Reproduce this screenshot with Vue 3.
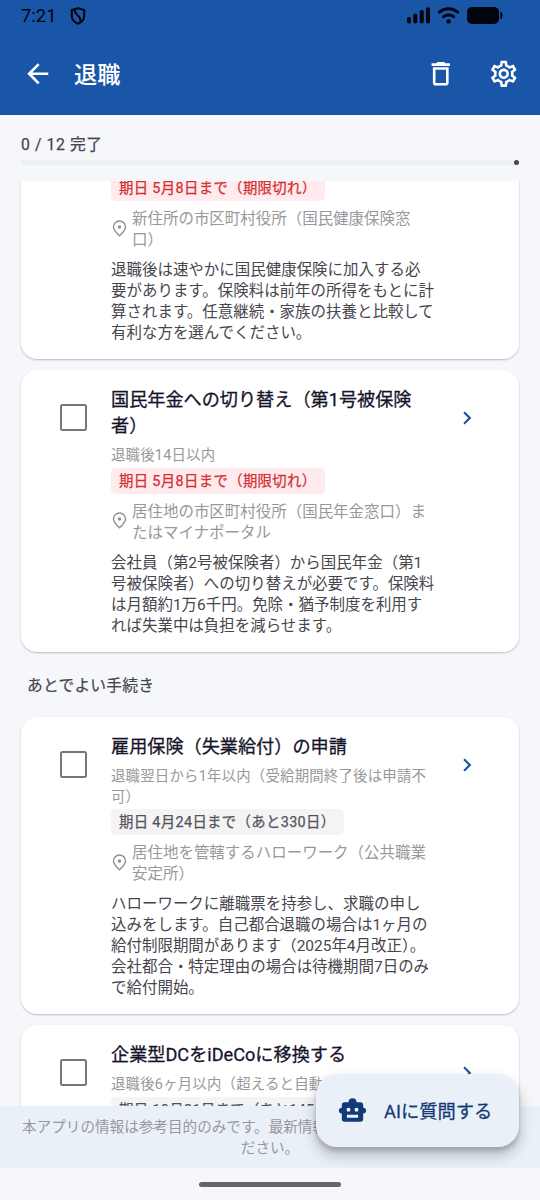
<script setup>
const gear = 'M19.43 12.98c.04-.32.07-.64.07-.98s-.03-.66-.07-.98l2.11-1.65c.19-.15.24-.42.12-.64l-2-3.46c-.09-.16-.26-.25-.44-.25-.06 0-.12.01-.17.03l-2.49 1c-.52-.4-1.08-.73-1.69-.98l-.38-2.65C14.46 2.18 14.25 2 14 2h-4c-.25 0-.46.18-.49.42l-.38 2.65c-.61.25-1.17.59-1.69.98l-2.49-1c-.06-.02-.12-.03-.18-.03-.17 0-.34.09-.43.25l-2 3.46c-.13.22-.07.49.12.64l2.11 1.65c-.04.32-.07.65-.07.98s.03.66.07.98l-2.11 1.65c-.19.15-.24.42-.12.64l2 3.46c.09.16.26.25.44.25.06 0 .12-.01.17-.03l2.49-1c.52.4 1.08.73 1.69.98l.38 2.65c.03.24.24.42.49.42h4c.25 0 .46-.18.49-.42l.38-2.65c.61-.25 1.17-.59 1.69-.98l2.49 1c.06.02.12.03.18.03.17 0 .34-.09.43-.25l2-3.46c.12-.22.07-.49-.12-.64l-2.11-1.65zm-1.98-1.71c.04.31.05.52.05.73 0 .21-.02.43-.05.73l-.14 1.13.89.7 1.08.84-.7 1.21-1.27-.51-1.04-.42-.9.68c-.43.32-.84.56-1.25.73l-1.06.43-.16 1.13-.2 1.35h-1.4l-.19-1.35-.16-1.13-1.06-.43c-.43-.18-.83-.41-1.23-.71l-.91-.7-1.06.43-1.27.51-.7-1.21 1.08-.84.89-.7-.14-1.13c-.03-.31-.05-.54-.05-.74s.02-.43.05-.73l.14-1.13-.89-.7-1.08-.84.7-1.21 1.27.51 1.04.42.9-.68c.43-.32.84-.56 1.25-.73l1.06-.43.16-1.13.2-1.35h1.39l.19 1.35.16 1.13 1.06.43c.43.18.83.41 1.23.71l.91.7 1.06-.43 1.27-.51.7 1.21-1.07.85-.89.7.14 1.13zM12 8c-2.21 0-4 1.79-4 4s1.79 4 4 4 4-1.79 4-4-1.79-4-4-4zm0 6c-1.1 0-2-.9-2-2s.9-2 2-2 2 .9 2 2-.9 2-2 2z'

const items = [
  {
    partial: true,
    title: [],
    sub: [],
    due: '期日 5月8日まで（期限切れ）',
    late: true,
    place: ['新住所の市区町村役所（国民健康保険窓', '口）'],
    desc: ['退職後は速やかに国民健康保険に加入する必', '要があります。保険料は前年の所得をもとに計', '算されます。任意継続・家族の扶養と比較して', '有利な方を選んでください。'],
  },
  {
    title: ['国民年金への切り替え（第1号被保険', '者）'],
    sub: ['退職後14日以内'],
    due: '期日 5月8日まで（期限切れ）',
    late: true,
    place: ['居住地の市区町村役所（国民年金窓口）ま', 'たはマイナポータル'],
    desc: ['会社員（第2号被保険者）から国民年金（第1', '号被保険者）への切り替えが必要です。保険料', 'は月額約1万6千円。免除・猶予制度を利用す', 'れば失業中は負担を減らせます。'],
  },
  {
    section: 'あとでよい手続き',
    title: ['雇用保険（失業給付）の申請'],
    sub: ['退職翌日から1年以内（受給期間終了後は申請不', '可）'],
    due: '期日 4月24日まで（あと330日）',
    place: ['居住地を管轄するハローワーク（公共職業', '安定所）'],
    desc: ['ハローワークに離職票を持参し、求職の申し', '込みをします。自己都合退職の場合は1ヶ月の', '給付制限期間があります（2025年4月改正）。', '会社都合・特定理由の場合は待機期間7日のみ', 'で給付開始。'],
  },
  {
    title: ['企業型DCをiDeCoに移換する'],
    sub: ['退職後6ヶ月以内（超えると自動'],
    due: '期日 10月21日まで（あと145日）',
    place: [],
    desc: [],
  },
]
</script>

<template>
  <div class="screen">
    <header class="top">
      <div class="status">
        <span class="clock">7:21</span>
        <svg class="shield" width="16" height="18" viewBox="0 0 16 18" fill="none" stroke="#02040d" stroke-width="2">
          <path d="M8 1.200 14.200 3v6c0 3.700-2.400 6.200-6.200 7.700C4.200 15.200 1.800 12.700 1.800 9V3z" stroke-linejoin="round" />
          <path d="M5 2.800C3.800 9.500 11.500 7 10.300 14.500" />
        </svg>
        <svg class="signals" width="98" height="20" viewBox="0 0 98 20" fill="#02040d">
          <rect x="0" y="11" width="4" height="6.500" rx="1.800" />
          <rect x="6.300" y="7.500" width="4" height="10" rx="1.800" />
          <rect x="12.700" y="4" width="4" height="13.500" rx="1.800" />
          <rect x="19" y="1.300" width="4" height="16.200" rx="1.800" />
          <g fill="none" stroke="#02040d" stroke-width="3" stroke-linecap="round">
            <path d="M32.500 6.200c5-4.600 13.200-4.600 18.200 0" />
            <path d="M36.600 10.700c2.900-2.400 7.200-2.400 10 0" />
          </g>
          <circle cx="41.600" cy="15.400" r="2.200" />
          <rect x="60" y="1" width="32" height="17" rx="5" />
          <path d="M93.300 5.500c3 1.300 3 6.700 0 8z" />
        </svg>
      </div>
      <div class="bar">
        <svg class="ic" viewBox="0 0 24 24"><path d="M20 11H7.830l5.590-5.590L12 4l-8 8 8 8 1.410-1.410L7.830 13H20z" /></svg>
        <h1>退職</h1>
        <svg class="ic" viewBox="0 0 24 24"><path d="M16 9v10H8V9h8m-1.500-6h-5l-1 1H5v2h14V4h-3.500l-1-1zM18 7H6v12c0 1.100.9 2 2 2h8c1.100 0 2-.9 2-2V7z" /></svg>
        <svg class="ic gear" viewBox="0 0 24 24"><path :d="gear" /></svg>
      </div>
    </header>

    <section class="progress">
      <div class="count">0 / 12 完了</div>
      <div class="track"><i></i></div>
    </section>

    <main class="list">
      <template v-for="(it, i) in items" :key="i">
        <h2 v-if="it.section">{{ it.section }}</h2>
        <article class="card" :class="{ partial: it.partial }">
          <div class="side"><span v-if="!it.partial" class="box"></span></div>
          <div class="body">
            <div v-if="it.title.length" class="title"><div v-for="l in it.title" :key="l">{{ l }}</div></div>
            <div v-if="it.sub.length" class="sub"><div v-for="l in it.sub" :key="l">{{ l }}</div></div>
            <div class="chip" :class="{ late: it.late }">{{ it.due }}</div>
            <div v-if="it.place.length" class="place">
              <svg width="17" height="17" viewBox="0 0 24 24" fill="none" stroke="#919196" stroke-width="2"><path d="M12 22.300C7.500 18 3.500 13.900 3.500 9.800a8.500 8.500 0 0 1 17 0c0 4.100-4 8.200-8.500 12.500z" /><circle cx="12" cy="9.800" r="1.500" fill="#919196" /></svg>
              <div><div v-for="l in it.place" :key="l">{{ l }}</div></div>
            </div>
            <div v-if="it.desc.length" class="desc"><div v-for="l in it.desc" :key="l">{{ l }}</div></div>
          </div>
          <svg v-if="!it.partial" class="chev" viewBox="0 0 24 24"><path d="M10 6 8.590 7.410 13.170 12l-4.580 4.590L10 18l6-6z" /></svg>
        </article>
      </template>
    </main>

    <footer class="note">
      <div class="n1">本アプリの情報は参考目的のみです。最新情報</div>
      <div class="n2">ださい。</div>
    </footer>
    <div class="home"><i></i></div>

    <button class="fab">
      <svg width="33" height="32" viewBox="0 0 24 24"><path fill="#133a78" fill-rule="evenodd" d="M22.200 11.700a2.300 2.300 0 0 0-2.200-2.200V7.500a2 2 0 0 0-2-2h-3a3 3 0 0 0-6 0H6a2 2 0 0 0-2 2v2a2.200 2.200 0 0 0 0 4.400V18a2 2 0 0 0 2 2h12a2 2 0 0 0 2-2v-4.100a2.200 2.200 0 0 0 2.200-2.200zM9 9.500a1.500 1.500 0 1 1 0 3 1.500 1.500 0 0 1 0-3zm6 0a1.500 1.500 0 1 1 0 3 1.500 1.500 0 0 1 0-3zM7.800 14.800h8.400v2.200H7.800z" /></svg>
      <span>AIに質問する</span>
    </button>
  </div>
</template>

<style>
body { margin: 0; }
</style>

<style scoped>
.screen {
  position: relative;
  width: 540px;
  height: 1200px;
  overflow: hidden;
  display: flex;
  flex-direction: column;
  background: #f5f7fb;
  font-family: Roboto, "Noto Sans CJK JP", sans-serif;
  white-space: nowrap;
}
.top { height: 115px; flex: none; background: #1a56a7; }
.status { height: 32px; display: flex; box-sizing: border-box; padding: 6px 35px 0 21px; }
.clock { font-size: 18.400px; line-height: 19px; width: 49px; color: #02040d; }
.shield { margin-top: .5px; }
.signals { margin-left: auto; }
.bar { height: 83px; display: flex; align-items: center; padding: 0 21px 0 21.500px; }
.ic { width: 31.500px; height: 31.500px; fill: #fff; }
.gear { margin-left: 31.500px; }
h1 { margin: 2px auto 0 21px; font-size: 23.200px; line-height: 34px; font-weight: 500; color: #fff; }
.progress { height: 66px; flex: none; box-sizing: border-box; padding: 19px 21px 0; }
.count { font-size: 15.750px; line-height: 22px; letter-spacing: .6px; color: #47464e; font-weight: 400; -webkit-text-stroke: .25px; }
.track { height: 5px; margin-top: 4px; border-radius: 3px; background: #eaf0f7; display: flex; justify-content: flex-end; }
.track i { width: 5px; height: 5px; border-radius: 50%; background: #47464e; }
.list { flex: none; height: 925px; overflow: hidden; padding: 0 21px; }
h2 { margin: 23px 0 20.500px 6px; font-size: 15.750px; line-height: 22px; font-weight: 400; letter-spacing: .2px; color: #47464e; -webkit-text-stroke: .2px; }
.card {
  display: flex;
  background: #fff;
  border-radius: 16px;
  padding: 17px 0 15px;
  margin-bottom: 11px;
  box-shadow: 0 1px 2px rgba(0, 0, 0, .24);
}
.partial { margin-top: -6px; padding-top: 0; border-radius: 0 0 16px 16px; }
.side { width: 90px; flex: none; }
.box { display: block; box-sizing: border-box; width: 27px; height: 27px; margin: 17px 0 0 39px; border: 2.600px solid #77767e; border-radius: 2.500px; }
.body { width: 340px; flex: none; }
.title { font-size: 18.150px; line-height: 26.250px; font-weight: 400; color: #14132a; margin-bottom: 5.500px; -webkit-text-stroke: .28px; }
.sub { font-size: 14.400px; line-height: 21px; letter-spacing: .22px; color: #98989c; margin-bottom: 1.500px; }
.chip { display: inline-block; box-sizing: border-box; height: 26px; line-height: 28px; padding: 0 8px; border-radius: 5px; background: #f4f4f5; color: #54535b; font-size: 14.400px; font-weight: 400; letter-spacing: .34px; vertical-align: top; -webkit-text-stroke: .25px; }
.late { background: #ffebee; color: #d32f2f; }
.place { display: flex; align-items: center; gap: 4px; margin-top: 8px; font-size: 15.480px; line-height: 21px; color: #98989c; }
.place svg { margin-bottom: 4px; }
.desc { margin-top: 9px; font-size: 15.480px; line-height: 21px; color: #47464e; }
.chev { width: 26px; height: 26px; margin: 17.500px 0 0 2.700px; fill: #1a56a7; }
.note { height: 62px; flex: none; box-sizing: border-box; padding: 11px 22px 0; background: #eaf0f7; color: #98989c; font-size: 14.600px; line-height: 21px; }
.n2 { text-align: center; }
.home { flex: 1; display: flex; justify-content: center; }
.home i { width: 142px; height: 5px; margin-top: 14px; border-radius: 3px; background: #67646b; }
.fab {
  position: absolute;
  left: 316px;
  top: 1074px;
  width: 203px;
  height: 73px;
  border: 0;
  border-radius: 21px;
  display: flex;
  align-items: center;
  gap: 15px;
  padding: 1px 0 0 20px;
  background: #eaf0f7;
  color: #133a78;
  font: 400 18.300px/28px Roboto, "Noto Sans CJK JP", sans-serif;
  box-shadow: 0 4px 4px rgba(0, 0, 0, .16), 0 8px 14px 1px rgba(0, 0, 0, .2);
}
.fab span { padding-top: 1px; -webkit-text-stroke: .28px; }
</style>
